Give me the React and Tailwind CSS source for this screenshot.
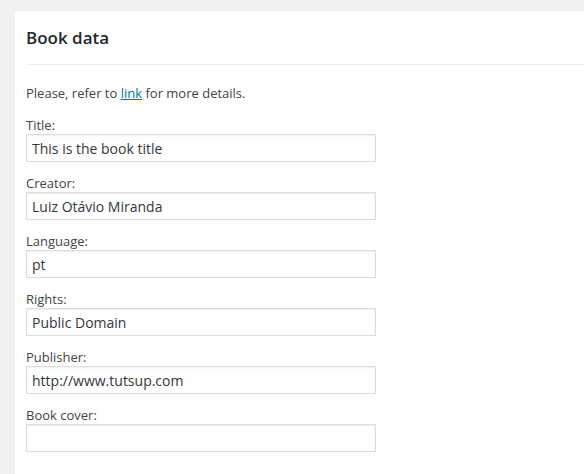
const FIELDS = [
  { label: 'Title:', value: 'This is the book title' },
  { label: 'Creator:', value: 'Luiz Otávio Miranda' },
  { label: 'Language:', value: 'pt' },
  { label: 'Rights:', value: 'Public Domain' },
  { label: 'Publisher:', value: 'http://www.tutsup.com' },
  { label: 'Book cover:', value: '' },
];

function Field({ label, value }) {
  return (
    <div className="mb-[12px]">
      <label className="block text-[13px] leading-[18px] text-[#444]">{label}</label>
      <input
        type="text"
        defaultValue={value}
        className="block h-[28px] w-[350px] border border-[#ddd] bg-white px-[5px] text-[14px] text-[#32373c] shadow-[inset_0_1px_2px_rgba(0,0,0,0.07)] outline-none"
      />
    </div>
  );
}

export default function App() {
  return (
    <div
      className="min-h-[474px] bg-[#f1f1f1] pl-[15px] pt-[11px]"
      style={{ fontFamily: '"Open Sans", "Noto Sans", sans-serif' }}
    >
      <section className="min-h-[463px] bg-white">
        <div className="ml-[11px] flex h-[54px] items-center border-b border-[#eee]">
          <h2 className="text-[17px] font-semibold text-[#23282d]">Book data</h2>
        </div>
        <div className="px-[11px] pt-[19px]">
          <p className="mb-[14px] text-[13px] leading-[18px] text-[#444]">
            Please, refer to{' '}
            <a href="#" className="text-[#0073aa] underline">
              link
            </a>{' '}
            for more details.
          </p>
          {FIELDS.map((field) => (
            <Field key={field.label} label={field.label} value={field.value} />
          ))}
        </div>
      </section>
    </div>
  );
}
